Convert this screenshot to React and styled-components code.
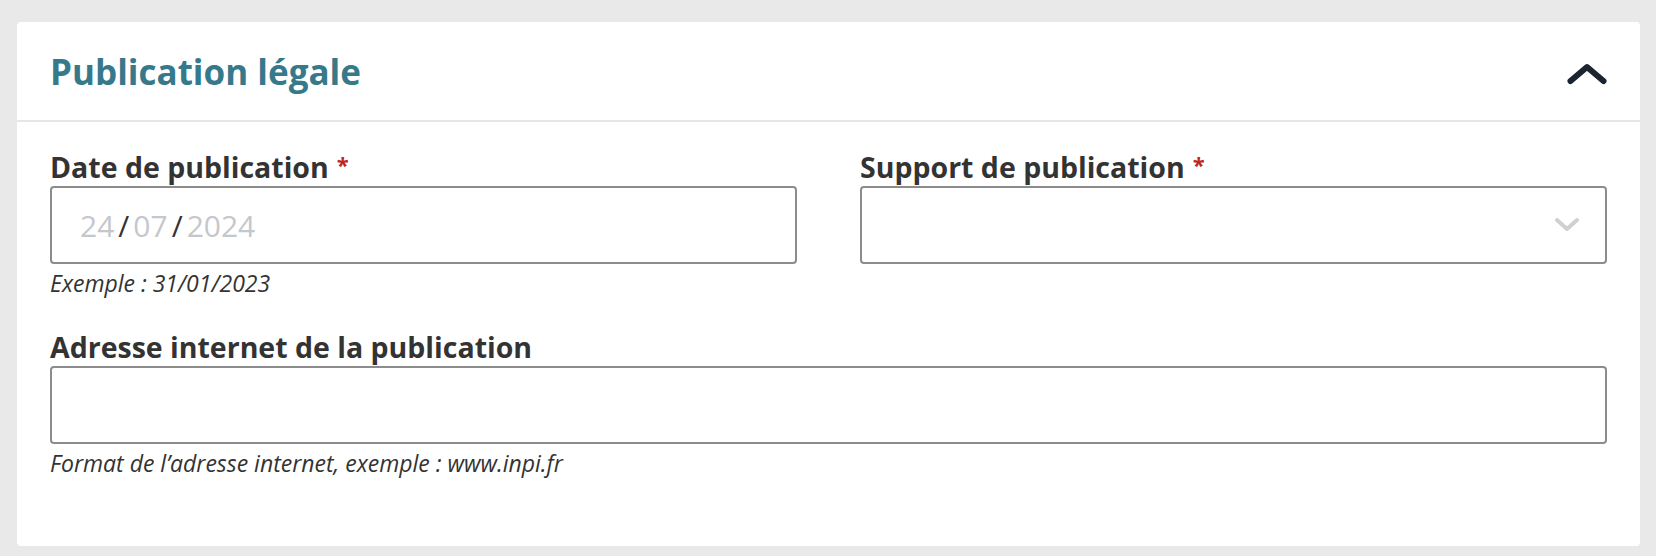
import React from 'react';
import styled, { createGlobalStyle } from 'styled-components';

const GlobalStyle = createGlobalStyle`
  html, body {
    margin: 0;
    padding: 0;
    background: #e9e9e9;
    font-family: 'Open Sans', 'Liberation Sans', sans-serif;
  }
`;

const Page = styled.div`
  padding: 22px 16px 10px 17px;
`;

const Card = styled.section`
  background: #fff;
  border-radius: 4px;
  overflow: hidden;
`;

const Header = styled.header`
  height: 98px;
  display: flex;
  align-items: center;
  justify-content: space-between;
  padding: 0 33px;
  border-bottom: 2px solid #e6e6e6;
`;

const Title = styled.h2`
  margin: 0;
  font-size: 35px;
  font-weight: 700;
  color: #36798b;
`;

const ToggleButton = styled.button`
  border: none;
  background: none;
  padding: 0;
  margin-top: 5px;
  display: flex;
  cursor: pointer;
`;

const Body = styled.div`
  padding: 26px 33px 68px;
`;

const Row = styled.div`
  display: grid;
  grid-template-columns: ${props => props.cols === 2 ? '1fr 1fr' : '1fr'};
  column-gap: 63px;
  margin-bottom: ${props => props.last ? '0' : '30px'};
`;

const Field = styled.div`
  display: flex;
  flex-direction: column;
`;

const Label = styled.label`
  font-size: 28.5px;
  line-height: 38px;
  font-weight: 700;
  color: #333;
`;

const Required = styled.span`
  color: #c0261b;
  margin-left: 8px;
  font-size: 22px;
  line-height: 0;
  vertical-align: 5px;
`;

const InputBox = styled.div`
  height: 74px;
  border: 2px solid #8c8c8c;
  border-radius: 4px;
  display: flex;
  align-items: center;
  justify-content: ${props => props.select ? 'flex-end' : 'flex-start'};
  padding: ${props => props.select ? '0 25px 0 0' : '0 0 0 28px'};
  font-size: 30px;
`;

const Segment = styled.span`
  color: ${props => props.sep ? '#333' : '#c4c7cc'};
  margin: ${props => props.sep ? '0 4px' : '0'};
`;

const Hint = styled.div`
  margin-top: 4px;
  font-size: 23px;
  line-height: 30px;
  font-style: italic;
  color: #333;
`;

function ChevronUp() {
  return (
    <svg width="40" height="22" viewBox="0 0 40 22">
      <polyline points="3.5,18 20,4 36.5,18" fill="none" stroke="#1c2431"
        strokeWidth="6" strokeLinecap="round" strokeLinejoin="round" />
    </svg>
  );
}

function ChevronDown() {
  return (
    <svg width="26" height="16" viewBox="0 0 26 16">
      <polyline points="3,3 13,12 23,3" fill="none" stroke="#d0d0d0"
        strokeWidth="4" strokeLinecap="round" strokeLinejoin="round" />
    </svg>
  );
}

export default function App() {
  return (
    <>
      <GlobalStyle />
      <Page>
        <Card>
          <Header>
            <Title>Publication légale</Title>
            <ToggleButton aria-label="Replier">
              <ChevronUp />
            </ToggleButton>
          </Header>
          <Body>
            <Row cols={2}>
              <Field>
                <Label>Date de publication<Required>*</Required></Label>
                <InputBox>
                  <Segment>24</Segment>
                  <Segment sep>/</Segment>
                  <Segment>07</Segment>
                  <Segment sep>/</Segment>
                  <Segment>2024</Segment>
                </InputBox>
                <Hint>Exemple : 31/01/2023</Hint>
              </Field>
              <Field>
                <Label>Support de publication<Required>*</Required></Label>
                <InputBox select>
                  <ChevronDown />
                </InputBox>
              </Field>
            </Row>
            <Row last>
              <Field>
                <Label>Adresse internet de la publication</Label>
                <InputBox />
                <Hint>Format de l’adresse internet, exemple : www.inpi.fr</Hint>
              </Field>
            </Row>
          </Body>
        </Card>
      </Page>
    </>
  );
}
